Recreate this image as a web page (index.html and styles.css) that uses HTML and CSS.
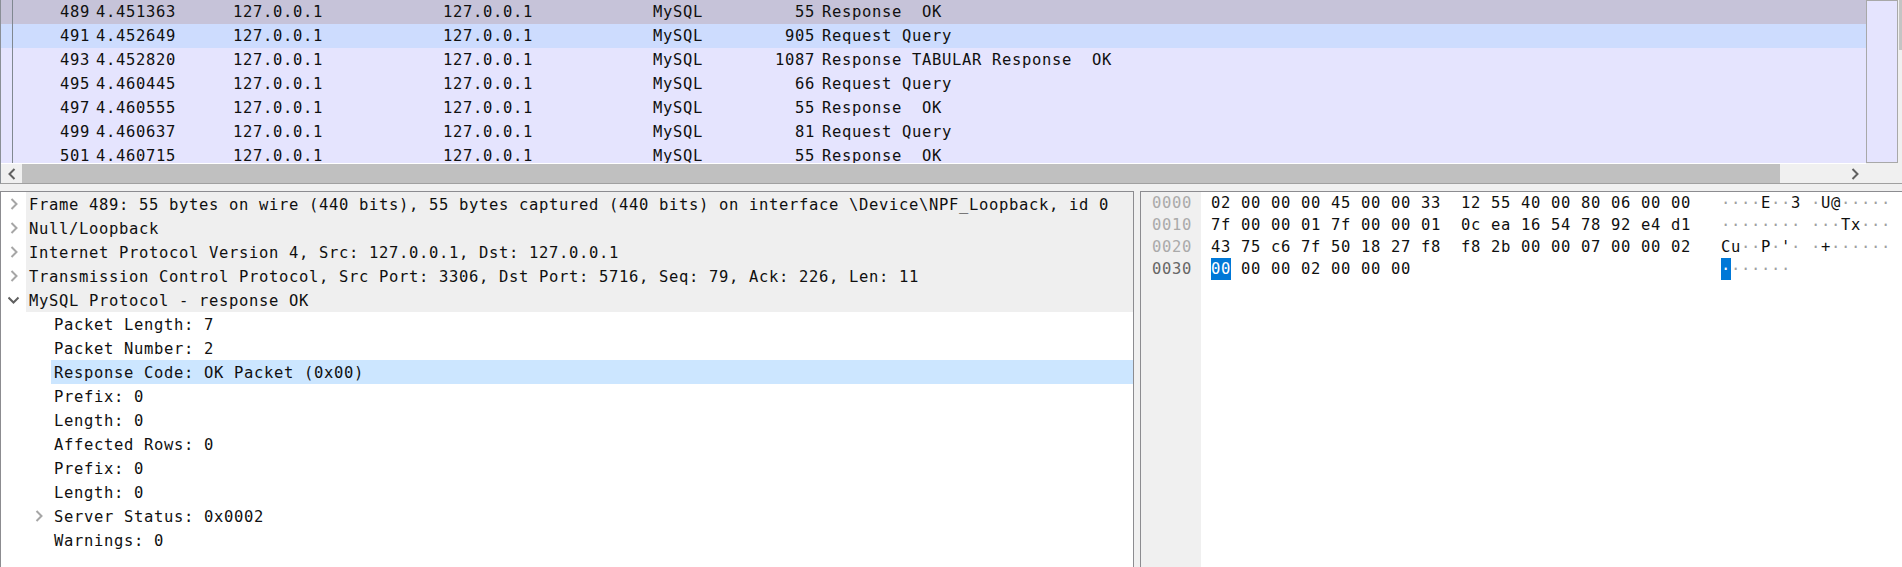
FILE: index.html
```html
<!DOCTYPE html>
<html lang="en">
<head>
    <meta charset="UTF-8">
    <title>Wireshark capture</title>
    <link rel="stylesheet" href="styles.css">
</head>
<body>
    <!-- Packet list -->
    <div class="packet-pane">
        <div class="packet-main">
            <div class="packet-rows">
                <div class="packet-row row-current"><span class="col-no">489</span><span>4.451363</span><span>127.0.0.1</span><span>127.0.0.1</span><span>MySQL</span><span class="col-len">55</span><span>Response  OK</span></div>
                <div class="packet-row row-related"><span class="col-no">491</span><span>4.452649</span><span>127.0.0.1</span><span>127.0.0.1</span><span>MySQL</span><span class="col-len">905</span><span>Request Query</span></div>
                <div class="packet-row"><span class="col-no">493</span><span>4.452820</span><span>127.0.0.1</span><span>127.0.0.1</span><span>MySQL</span><span class="col-len">1087</span><span>Response TABULAR Response  OK</span></div>
                <div class="packet-row"><span class="col-no">495</span><span>4.460445</span><span>127.0.0.1</span><span>127.0.0.1</span><span>MySQL</span><span class="col-len">66</span><span>Request Query</span></div>
                <div class="packet-row"><span class="col-no">497</span><span>4.460555</span><span>127.0.0.1</span><span>127.0.0.1</span><span>MySQL</span><span class="col-len">55</span><span>Response  OK</span></div>
                <div class="packet-row"><span class="col-no">499</span><span>4.460637</span><span>127.0.0.1</span><span>127.0.0.1</span><span>MySQL</span><span class="col-len">81</span><span>Request Query</span></div>
                <div class="packet-row"><span class="col-no">501</span><span>4.460715</span><span>127.0.0.1</span><span>127.0.0.1</span><span>MySQL</span><span class="col-len">55</span><span>Response  OK</span></div>
            </div>
            <div class="hscroll">
                <div class="hscroll-btn">
                    <svg width="10" height="12" viewBox="0 0 10 12"><path d="M7.5 1 2.5 6 7.5 11" class="arrow-dark"/></svg>
                </div>
                <div class="hscroll-thumb"></div>
                <div class="hscroll-btn hscroll-right">
                    <svg width="10" height="12" viewBox="0 0 10 12"><path d="M2.5 1 7.5 6 2.5 11" class="arrow-dark"/></svg>
                </div>
            </div>
        </div>
        <div class="intel-map"></div>
        <div class="vscroll"><div class="vscroll-thumb"></div></div>
    </div>

    <div class="bottom-panes">
        <!-- Packet details -->
        <div class="detail-pane">
            <div class="tree-row tree-top"><svg class="twisty" width="12" height="12" viewBox="0 0 12 12"><path d="M3.5 1 8.5 6 3.5 11" class="arrow-grey"/></svg><span class="tree-text">Frame 489: 55 bytes on wire (440 bits), 55 bytes captured (440 bits) on interface \Device\NPF_Loopback, id 0</span></div>
            <div class="tree-row tree-top"><svg class="twisty" width="12" height="12" viewBox="0 0 12 12"><path d="M3.5 1 8.5 6 3.5 11" class="arrow-grey"/></svg><span class="tree-text">Null/Loopback</span></div>
            <div class="tree-row tree-top"><svg class="twisty" width="12" height="12" viewBox="0 0 12 12"><path d="M3.5 1 8.5 6 3.5 11" class="arrow-grey"/></svg><span class="tree-text">Internet Protocol Version 4, Src: 127.0.0.1, Dst: 127.0.0.1</span></div>
            <div class="tree-row tree-top"><svg class="twisty" width="12" height="12" viewBox="0 0 12 12"><path d="M3.5 1 8.5 6 3.5 11" class="arrow-grey"/></svg><span class="tree-text">Transmission Control Protocol, Src Port: 3306, Dst Port: 5716, Seq: 79, Ack: 226, Len: 11</span></div>
            <div class="tree-row tree-top"><svg class="twisty" width="12" height="12" viewBox="0 0 12 12"><path d="M0.5 3.5 5.5 8.5 10.5 3.5" class="arrow-open"/></svg><span class="tree-text">MySQL Protocol - response OK</span></div>
            <div class="tree-row tree-child"><span class="tree-text">Packet Length: 7</span></div>
            <div class="tree-row tree-child"><span class="tree-text">Packet Number: 2</span></div>
            <div class="tree-row tree-child tree-selected"><span class="tree-text">Response Code: OK Packet (0x00)</span></div>
            <div class="tree-row tree-child"><span class="tree-text">Prefix: 0</span></div>
            <div class="tree-row tree-child"><span class="tree-text">Length: 0</span></div>
            <div class="tree-row tree-child"><span class="tree-text">Affected Rows: 0</span></div>
            <div class="tree-row tree-child"><span class="tree-text">Prefix: 0</span></div>
            <div class="tree-row tree-child"><span class="tree-text">Length: 0</span></div>
            <div class="tree-row tree-child tree-closed"><svg class="twisty" width="12" height="12" viewBox="0 0 12 12"><path d="M3.5 1 8.5 6 3.5 11" class="arrow-grey"/></svg><span class="tree-text">Server Status: 0x0002</span></div>
            <div class="tree-row tree-child"><span class="tree-text">Warnings: 0</span></div>
        </div>

        <!-- Packet bytes -->
        <div class="bytes-pane">
            <div class="offsets">
                <div class="byte-row">0000</div>
                <div class="byte-row">0010</div>
                <div class="byte-row">0020</div>
                <div class="byte-row offset-active">0030</div>
            </div>
            <div class="hex">
                <div class="byte-row">02 00 00 00 45 00 00 33  12 55 40 00 80 06 00 00</div>
                <div class="byte-row">7f 00 00 01 7f 00 00 01  0c ea 16 54 78 92 e4 d1</div>
                <div class="byte-row">43 75 c6 7f 50 18 27 f8  f8 2b 00 00 07 00 00 02</div>
                <div class="byte-row"><span class="byte-hit">00</span> 00 00 02 00 00 00</div>
            </div>
            <div class="ascii">
                <div class="byte-row"><i>····</i>E<i>··</i>3 <i>·</i>U@<i>·····</i></div>
                <div class="byte-row"><i>········</i> <i>···</i>Tx<i>···</i></div>
                <div class="byte-row">Cu<i>··</i>P<i>·</i>'<i>·</i> <i>·</i>+<i>······</i></div>
                <div class="byte-row"><span class="byte-hit">·</span><i>······</i></div>
            </div>
        </div>
    </div>
</body>
</html>
```

FILE: styles.css
```css
/* Wireshark main window, three panes */
html, body {
    margin: 0;
    height: 100%;
    overflow: hidden;
}
body {
    font-family: "DejaVu Sans Mono", monospace;
    font-size: 15.5px;
    letter-spacing: 0.668px;
    color: #101010;
    background: #f0f0f0;
}

/* Packet list */
.packet-pane {
    display: flex;
    height: 184px;
    border-bottom: 1px solid #a0a0a0;
    border-left: 1px solid #8a8f96;
    box-sizing: border-box;
}
.packet-main {
    flex: 1;
    display: flex;
    flex-direction: column;
    min-width: 0;
    background: #fff;
}
.packet-rows {
    height: 163px;
    overflow: hidden;
}
.packet-row {
    display: grid;
    grid-template-columns: 95px 137px 210px 210px 120px 42px 1fr;
    height: 24px;
    line-height: 25px;
    white-space: pre;
    background: #e5e4fe;
    background-image: linear-gradient(#808890, #808890);
    background-size: 1px 100%;
    background-position: 11px 0;
    background-repeat: no-repeat;
}
.row-current {
    background-color: #c6c3d9;
}
.row-related {
    background-color: #cddcfe;
}
.col-no {
    text-align: right;
    padding-right: 6px;
}
.col-len {
    text-align: right;
}
.packet-row span:last-child {
    padding-left: 7px;
}
.hscroll {
    display: flex;
    height: 19px;
    margin-top: 1px;
    background: #f0f0f0;
}
.hscroll-btn {
    width: 21px;
    display: flex;
    align-items: center;
    justify-content: center;
}
.hscroll-thumb {
    width: 1758px;
    background: #c0c0c0;
}
.hscroll-right {
    margin-left: auto;
    width: 22px;
}
.arrow-dark {
    fill: none;
    stroke: #606060;
    stroke-width: 2;
}
.intel-map {
    width: 32px;
    height: 163px;
    box-sizing: border-box;
    border: 1px solid #a8a8a8;
    background: #e5e4fe;
    flex: none;
}
.vscroll {
    width: 4px;
    flex: none;
}
.vscroll-thumb {
    height: 50px;
    margin-left: 1px;
    background: #c4c4c4;
}

/* Lower panes */
.bottom-panes {
    display: flex;
    gap: 6px;
    margin-top: 7px;
    height: 376px;
}
.detail-pane {
    width: 1134px;
    box-sizing: border-box;
    border: 1px solid #8c8c90;
    border-width: 1px 1px 0 1px;
    background: #fff;
    flex: none;
}
.tree-row {
    display: flex;
    align-items: center;
    height: 24px;
    line-height: 24px;
    white-space: pre;
}
.tree-text {
    position: relative;
    top: 1px;
}
.tree-top {
    background: linear-gradient(#efefef, #efefef) no-repeat 25px 0;
    padding-left: 7px;
}
.tree-top .tree-text {
    margin-left: 9px;
}
.tree-child {
    padding-left: 53px;
}
.tree-selected {
    background: linear-gradient(#cce6ff, #cce6ff) no-repeat 50px 0;
}
.tree-closed {
    padding-left: 32px;
}
.tree-closed .tree-text {
    margin-left: 9px;
}
.twisty {
    flex: none;
}
.arrow-grey {
    fill: none;
    stroke: #a6a6a6;
    stroke-width: 2;
}
.arrow-open {
    fill: none;
    stroke: #606060;
    stroke-width: 2;
}

/* Bytes */
.bytes-pane {
    flex: 1;
    display: flex;
    border-top: 1px solid #8c8c90;
    border-left: 1px solid #8c8c90;
    background: #fff;
}
.byte-row {
    height: 22px;
    line-height: 23px;
    white-space: pre;
}
.offsets {
    width: 60px;
    box-sizing: border-box;
    padding-left: 11px;
    background: #f0f0f0;
    color: #aaa;
}
.offset-active {
    color: #666;
}
.hex {
    width: 510px;
    margin-left: 10px;
}
.ascii i {
    font-style: normal;
    color: #a0a0a0;
}
.byte-hit {
    display: inline-block;
    height: 22px;
    vertical-align: top;
    background: #0078d7;
    color: #fff;
}
```
